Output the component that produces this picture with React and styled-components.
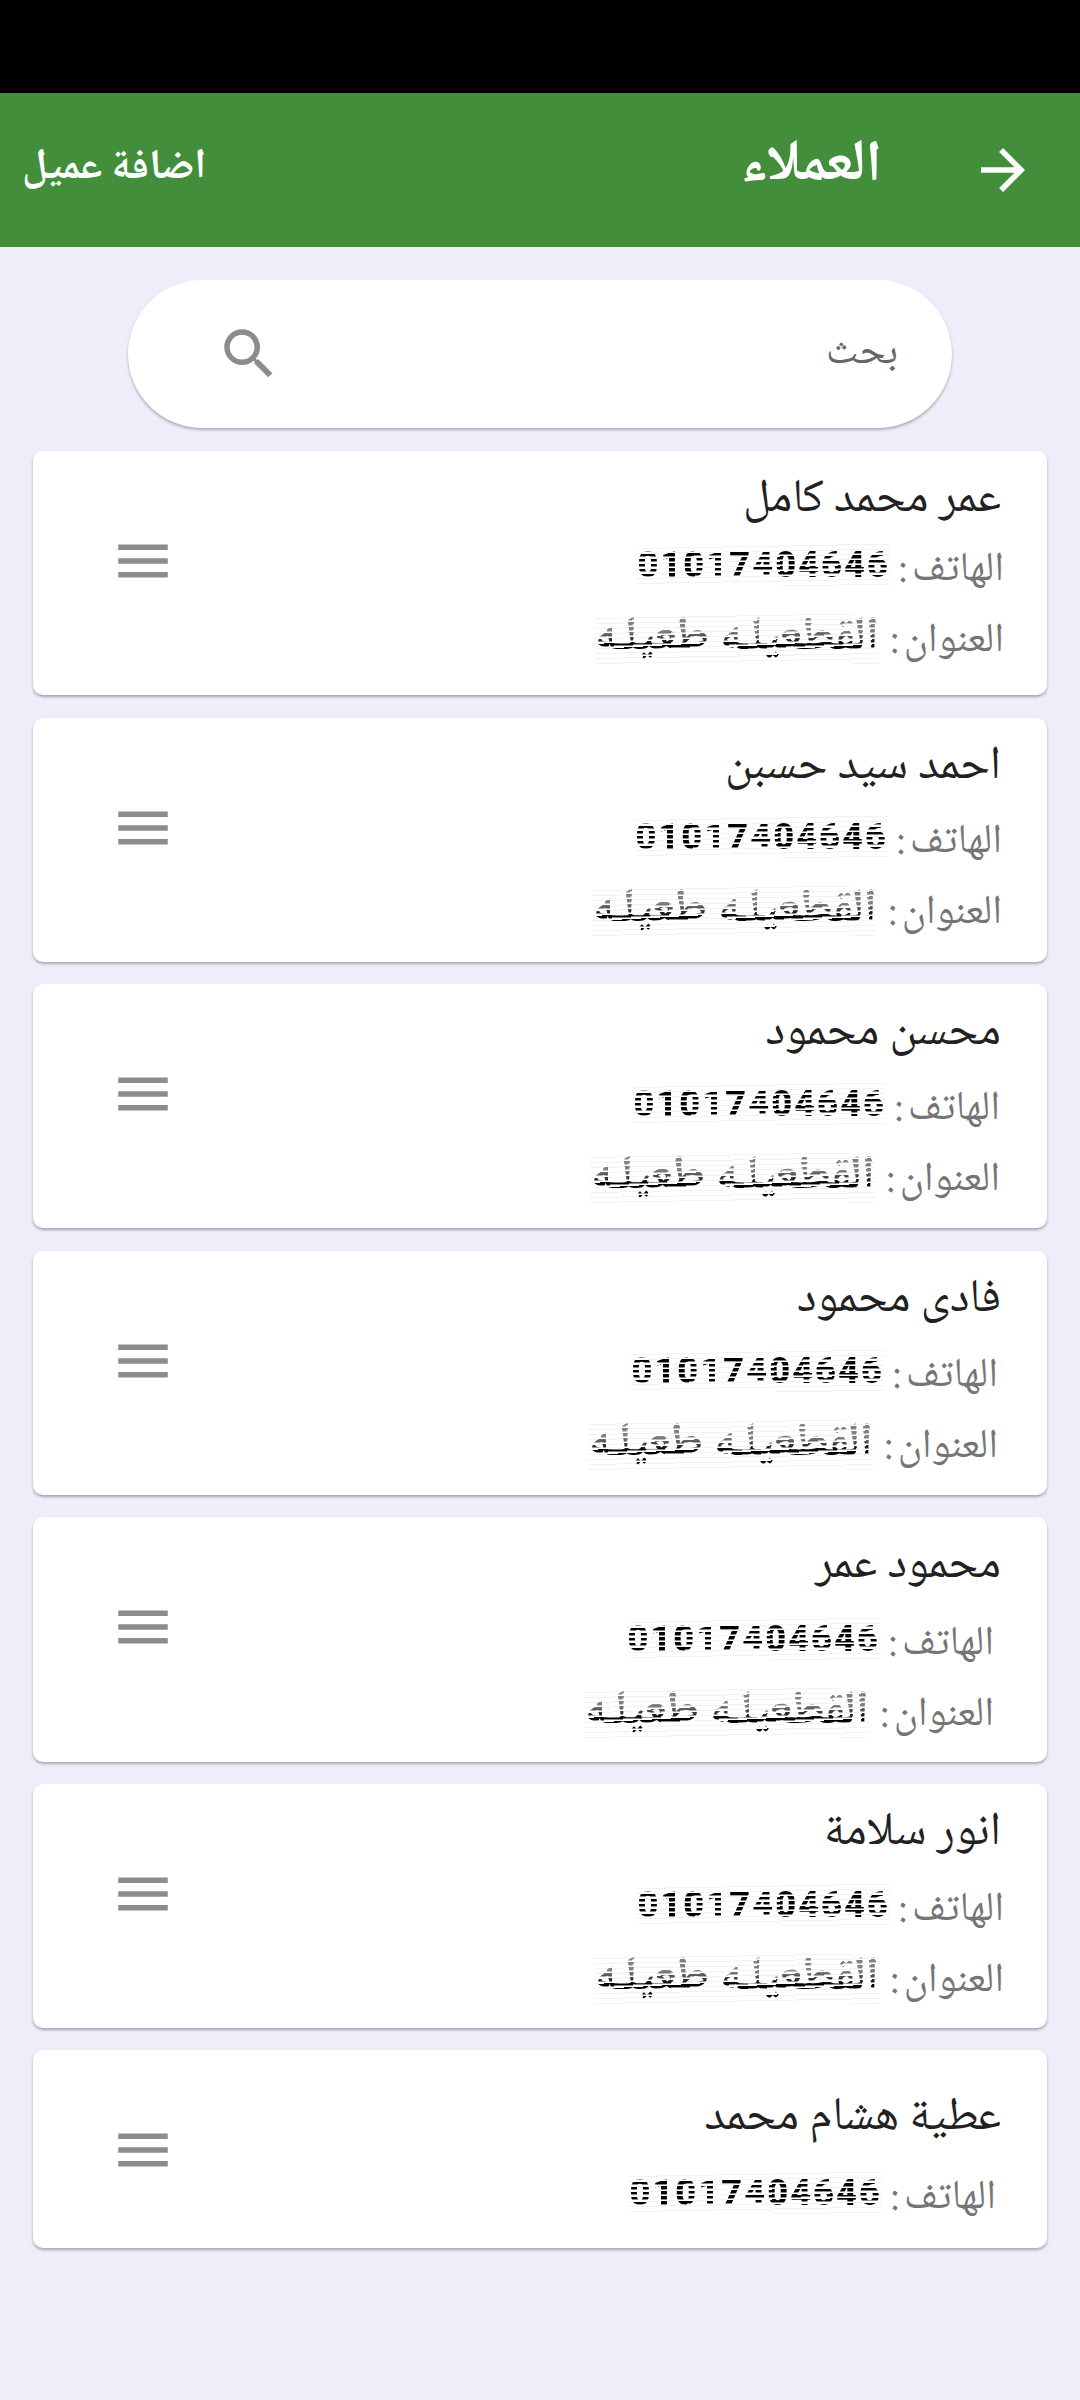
import React from "react";
import styled, { createGlobalStyle } from "styled-components";
import { MdArrowForward, MdMenu, MdSearch } from "react-icons/md";

const GlobalStyle = createGlobalStyle`
  * {
    box-sizing: border-box;
  }
  body {
    margin: 0;
    background: #eeedfa;
    font-family: "Noto Naskh Arabic", "Noto Sans Arabic", "DejaVu Sans", sans-serif;
  }
`;

const Screen = styled.div`
  width: 1080px;
  height: 2400px;
  background: #eeedfa;
  overflow: hidden;
`;

const StatusBar = styled.div`
  height: 93px;
  background: #000;
`;

const Toolbar = styled.header`
  display: flex;
  align-items: flex-start;
  height: 154px;
  padding: 0 44px 0 22px;
  background: #428e3b;
  color: #fff;
  svg {
    margin-top: 44px;
  }
`;

const Title = styled.h1`
  margin: 33px 88px 0 0;
  font-size: 58px;
  font-weight: 700;
  line-height: 84px;
`;

const AddButton = styled.button`
  margin: 41px auto 0 0;
  padding: 0;
  border: 0;
  background: none;
  color: #fff;
  font: 700 42px/70px "Noto Naskh Arabic", "Noto Sans Arabic", "DejaVu Sans", sans-serif;
`;

const SearchBox = styled.div`
  display: flex;
  justify-content: space-between;
  width: 824px;
  height: 148px;
  margin: 33px auto 23px;
  padding: 0 54px 0 88px;
  border-radius: 74px;
  background: #fff;
  color: #8c8c8c;
  box-shadow: 0 2px 3px rgba(0, 0, 0, 0.28);
  svg {
    margin-top: 41px;
  }
`;

const Hint = styled.span`
  margin-top: 39px;
  color: #666;
  font-size: 41px;
  line-height: 70px;
`;

const List = styled.ul`
  display: flex;
  flex-direction: column;
  gap: 22.4px;
  margin: 0;
  padding: 0 33px;
  list-style: none;
`;

const Card = styled.li`
  display: flex;
  justify-content: space-between;
  height: ${(p) => (p.$short ? 198 : 244.2)}px;
  padding: ${(p) => (p.$short ? 39 : 20)}px 46px 0 77px;
  border-radius: 10px;
  background: #fff;
  color: #8c8c8c;
  box-shadow: 0 2px 3px rgba(0, 0, 0, 0.3);
  svg {
    flex: none;
    margin-top: ${(p) => (p.$short ? 28 : 57)}px;
  }
`;

const Name = styled.h2`
  margin: 0;
  color: #212121;
  font-size: 47px;
  font-weight: 400;
  line-height: 60px;
  white-space: nowrap;
`;

const Details = styled.div`
  margin: ${(p) => p.$gap}px ${(p) => p.$shift}px 0 0;
`;

const Line = styled.div`
  display: flex;
  height: 71px;
  line-height: 71px;
  color: #757575;
  font-size: 41px;
  white-space: nowrap;
  word-spacing: -4px;
`;

const Label = styled.span`
  width: ${(p) => p.$width}px;
`;

/* text broken up into thin dark scan lines */
const Scrambled = styled.span`
  height: ${(p) => (p.$address ? 50 : 42)}px;
  margin-top: ${(p) => (p.$address ? 7 : 8)}px;
  margin-right: 14px;
  color: transparent;
  background-image: linear-gradient(
      rgba(255, 255, 255, ${(p) => (p.$address ? 0.5 : 0)}) 35%,
      rgba(255, 255, 255, 0) 60%
    ),
    repeating-linear-gradient(
      ${(p) => (p.$address ? 177 : 179)}deg,
      #000 0 2.5px,
      #888 2.5px 3.5px,
      #fff 3.5px 5px
    ),
    repeating-linear-gradient(179deg, #fff 0 4px, #f3f3f3 4px 5px);
  background-clip: text, text, border-box;
  -webkit-background-clip: text, text, border-box;
  font: ${(p) =>
    p.$address
      ? '700 47.5px/50px "Noto Naskh Arabic", "DejaVu Sans", sans-serif'
      : "900 36px/42px Roboto, sans-serif"};
  letter-spacing: ${(p) => (p.$address ? 0 : 2.1)}px;
  word-spacing: 0;
`;

const customers = [
  { name: "عمر محمد كامل", gap: 4.5, shift: -3 },
  { name: "احمد سيد حسبن", gap: 10.5, shift: -1 },
  { name: "محسن محمود", gap: 10.5, shift: 1 },
  { name: "فادى محمود", gap: 11, shift: 3 },
  { name: "محمود عمر", gap: 13, shift: 7 },
  { name: "انور سلامة", gap: 12, shift: -3 },
  { name: "عطية هشام محمد", gap: 15, shift: 5, short: true },
];

const Customer = ({ name, gap, shift, short }) => {
  return (
    <Card $short={short}>
      <div>
        <Name>{name}</Name>
        <Details $gap={gap} $shift={shift}>
          <Line>
            <Label $width={100}>الهاتف :</Label>
            <Scrambled>01017404646</Scrambled>
          </Line>
          {!short && (
            <Line>
              <Label $width={111}>العنوان :</Label>
              <Scrambled $address>القطعيلـه طعيلـه</Scrambled>
            </Line>
          )}
        </Details>
      </div>
      <MdMenu size={66} />
    </Card>
  );
};

const App = () => {
  return (
    <Screen dir="rtl">
      <GlobalStyle />
      <StatusBar />
      <Toolbar>
        <MdArrowForward size={66} />
        <Title>العملاء</Title>
        <AddButton>اضافة عميل</AddButton>
      </Toolbar>
      <SearchBox>
        <Hint>بحث</Hint>
        <MdSearch size={66} />
      </SearchBox>
      <List>
        {customers.map((c) => (
          <Customer key={c.name} {...c} />
        ))}
      </List>
    </Screen>
  );
};

export default App;
